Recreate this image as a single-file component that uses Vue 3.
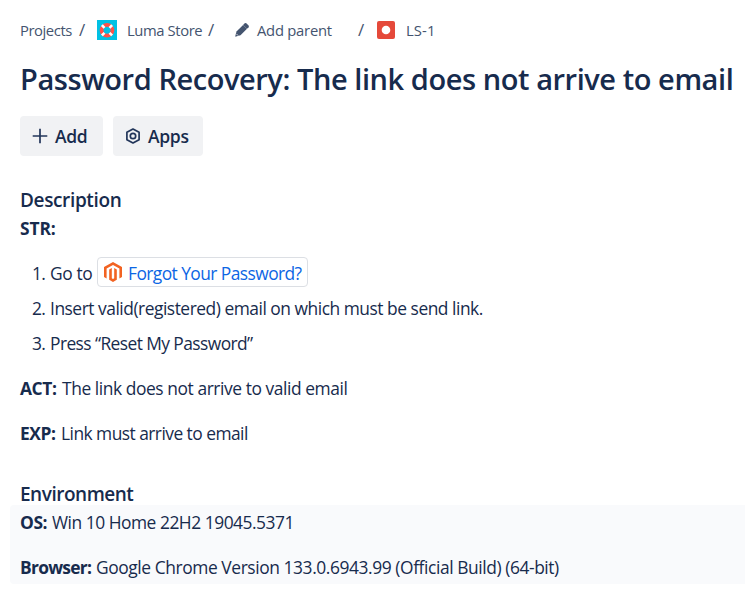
<script setup>
const steps = [
  { number: 2, text: 'Insert valid(registered) email on which must be send link.', cls: 'insert' },
  { number: 3, text: 'Press “Reset My Password”', cls: 'press' },
]
</script>

<template>
  <main class="issue">
    <nav class="crumbs">
      <span class="projects">Projects</span>
      <span class="slash first">/</span>
      <svg class="store-icon" width="20" height="20" viewBox="0 0 20 20">
        <rect width="20" height="20" fill="#00c1e4" />
        <circle cx="10" cy="10.3" r="5.4" fill="none" stroke="#ff5147" stroke-width="3.8" />
        <path d="M4.9 5.2 7.5 7.8M15.1 5.2 12.5 7.8M4.9 15.4 7.5 12.8M15.1 15.4 12.5 12.8" stroke="#fff" stroke-width="2.6" />
      </svg>
      <span class="store">Luma Store</span>
      <span class="slash second">/</span>
      <svg class="pencil" width="16" height="16" viewBox="0 0 16 16" fill="#44546f">
        <path d="M2.5 9.5 9.1 2.9 13 6.8 6.5 13.3 2 14.6Q1.1 14.8 1.3 13.9Z" />
        <path d="M9.1 2.9 10.7 1.3Q11.5.6 12.3 1.3L14.6 3.6Q15.3 4.4 14.6 5.2L13 6.8Z" />
        <path d="M2.4 11.9 4.1 13.6" stroke="#fff" stroke-width=".8" />
      </svg>
      <span class="parent">Add parent</span>
      <span class="slash third">/</span>
      <svg class="bug" width="18" height="18" viewBox="0 0 18 18">
        <rect width="18" height="18" rx="2" fill="#e5493a" />
        <circle cx="9" cy="9" r="4.3" fill="#fff" />
      </svg>
      <span class="key">LS-1</span>
    </nav>

    <h1>Password Recovery: The link does not arrive to email</h1>

    <div class="actions">
      <button class="add">
        <svg width="16" height="16" viewBox="0 0 16 16" fill="none" stroke="#22365a" stroke-width="1.7">
          <path d="M8 .7V15.3M.7 8H15.3" />
        </svg>
        <span>Add</span>
      </button>
      <button class="apps">
        <svg width="16" height="16" viewBox="0 0 16 16" fill="none" stroke="#22365a" stroke-width="1.7" stroke-linejoin="round">
          <path d="M8 1 14.1 4.3V11.7L8 15 1.9 11.7V4.3Z" />
          <circle cx="8" cy="8" r="2.7" />
        </svg>
        <span>Apps</span>
      </button>
    </div>

    <section class="description">
      <h2 class="h-desc">Description</h2>
      <p class="line first-line"><b class="str">STR:</b></p>
      <ol>
        <li class="goto">
          <span class="num">1.</span>
          <span class="go">Go to</span>
          <a class="card">
            <svg width="18" height="20" viewBox="0 0 18 20" fill="#f26322">
              <path d="M9 0 18 5V15L15.4 16.5V6.4L9 2.9 2.6 6.4V16.5L0 15V5Z" />
              <path d="M5.2 7.5 7.8 6V16.2L9 16.9 10.2 16.2V6L12.8 7.5V17.8L9 20 5.2 17.8Z" />
            </svg>
            <span>Forgot Your Password?</span>
          </a>
        </li>
        <li v-for="step in steps" :key="step.number">
          <span class="num">{{ step.number }}.</span>
          <span :class="step.cls">{{ step.text }}</span>
        </li>
      </ol>
      <p class="line act"><b>ACT:</b><span>The link does not arrive to valid email</span></p>
      <p class="line exp"><b>EXP:</b><span>Link must arrive to email</span></p>
    </section>

    <section class="environment">
      <h2 class="h-env">Environment</h2>
      <div class="panel">
        <p class="line os"><b>OS:</b><span>Win 10 Home 22H2 19045.5371</span></p>
        <p class="line browser"><b>Browser:</b><span>Google Chrome Version 133.0.6943.99 (Official Build) (64-bit)</span></p>
      </div>
    </section>
  </main>
</template>

<style>
body {
  margin: 0;
  background: #fff;
}
</style>

<style scoped>
.issue {
  box-sizing: border-box;
  height: 615px;
  padding: 18px 0 0 20px;
  overflow: hidden;
  color: #172b4d;
  font: 17.4px/26px "Open Sans", "Noto Sans", sans-serif;
  white-space: nowrap;
}
h1, h2, p, ol { margin: 0; padding: 0; }
.crumbs {
  display: flex;
  align-items: center;
  height: 24px;
  color: #44546f;
  font-size: 14.8px;
  line-height: 24px;
}
.crumbs > * { flex-shrink: 0; }
.projects { width: 59px; letter-spacing: -0.43px; }
.slash { font-size: 17px; }
.first { width: 18px; }
.store-icon { width: 20px; }
.store { width: 72px; margin-left: 10px; padding-right: 9px; letter-spacing: -0.4px; }
.second { width: 26px; }
.pencil { width: 16px; }
.parent { width: 101px; margin-left: 7px; letter-spacing: -0.25px; }
.third { width: 19px; }
.key { margin-left: 11px; letter-spacing: 0.1px; }
h1 {
  margin-top: 17px;
  font-size: 29px;
  font-weight: 570;
  line-height: 40px;
  letter-spacing: -0.44px;
}
.actions { display: flex; gap: 10px; margin-top: 17px; }
button {
  display: flex;
  align-items: center;
  gap: 7px;
  height: 40px;
  padding: 0 0 0 12px;
  border: 0;
  border-radius: 4px;
  background: #f1f2f4;
  color: #172b4d;
  font: 600 17.5px/40px "Open Sans", "Noto Sans", sans-serif;
  letter-spacing: -0.3px;
}
.add { width: 83px; }
.apps { width: 90px; }
.description { margin-top: 31px; }
h2 { font-size: 19px; font-weight: 580; line-height: 27px; }
.h-desc { letter-spacing: -0.36px; }
.h-env { letter-spacing: -0.48px; }
.line { display: flex; height: 26px; margin-top: 2px; }
.first-line { margin-top: 1px; }
b { font-weight: 700; letter-spacing: -0.4px; }
.str { letter-spacing: -0.1px; }
ol { margin-top: 14px; list-style: none; }
li { display: flex; height: 35px; align-items: center; }
.num { width: 18px; margin-left: 12px; letter-spacing: -0.6px; }
.go { width: 47px; letter-spacing: -0.4px; }
.card {
  box-sizing: border-box;
  display: flex;
  align-items: center;
  gap: 6px;
  width: 211px;
  height: 30px;
  margin-bottom: 2px;
  padding-left: 6px;
  border: 1px solid #dcdfe4;
  border-radius: 4px;
  color: #0c66e4;
  letter-spacing: -0.57px;
}
.card span { padding-top: 2px; }
.insert { letter-spacing: -0.48px; }
.press { letter-spacing: -0.58px; }
.act { margin-top: 15px; }
.act b { width: 42px; }
.act span { letter-spacing: -0.43px; }
.exp { margin-top: 19px; }
.exp b { width: 41px; }
.exp span { letter-spacing: -0.54px; }
.environment { margin-top: 35px; }
.panel {
  box-sizing: border-box;
  height: 79px;
  margin: -3px 0 0 -10px;
  padding: 4px 0 0 10px;
  border-radius: 4px 0 0 4px;
  background: #f9fafc;
}
.os { margin-top: 0; }
.os b { width: 32px; }
.os span { letter-spacing: -0.48px; }
.browser { margin-top: 19px; }
.browser b { width: 76px; letter-spacing: -0.72px; }
.browser span { letter-spacing: -0.42px; }
</style>
